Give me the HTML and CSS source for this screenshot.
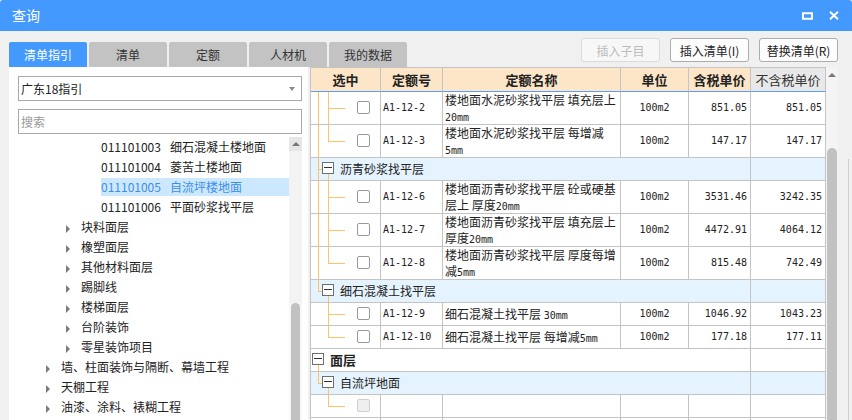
FILE: index.html
```html
<!DOCTYPE html>
<html lang="zh">
<head>
<meta charset="utf-8">
<title>查询</title>
<link rel="stylesheet" href="styles.css">
</head>
<body>
<div class="window">
  <div class="titlebar">
    <span class="title">查询</span>
    <span class="ctrls">
      <svg class="ic" width="11" height="8" viewBox="0 0 11 8"><rect x="1" y="1.25" width="9" height="5.5" fill="none" stroke="#fff" stroke-width="2"/></svg>
      <svg class="ic" width="10" height="9" viewBox="0 0 10 9"><path d="M1 0.8L9 8.2M9 0.8L1 8.2" stroke="#fff" stroke-width="2"/></svg>
    </span>
  </div>

  <div class="toolbar">
    <div class="tabs">
      <div class="tab active">清单指引</div>
      <div class="tab">清单</div>
      <div class="tab">定额</div>
      <div class="tab">人材机</div>
      <div class="tab">我的数据</div>
    </div>
    <div class="buttons">
      <button class="btn disabled">插入子目</button>
      <button class="btn">插入清单(I)</button>
      <button class="btn">替换清单(R)</button>
    </div>
  </div>

  <div class="content">
    <div class="left">
      <div class="select"><span>广东18指引</span><span class="caret"></span></div>
      <div class="search">搜索</div>
      <div class="tree-wrap">
        <div class="tree">
          <div class="node l3"><span class="code">011101003</span>细石混凝土楼地面</div>
          <div class="node l3"><span class="code">011101004</span>菱苦土楼地面</div>
          <div class="node l3 sel"><span class="code">011101005</span>自流坪楼地面</div>
          <div class="node l3"><span class="code">011101006</span>平面砂浆找平层</div>
          <div class="node l2"><span class="tri"></span>块料面层</div>
          <div class="node l2"><span class="tri"></span>橡塑面层</div>
          <div class="node l2"><span class="tri"></span>其他材料面层</div>
          <div class="node l2"><span class="tri"></span>踢脚线</div>
          <div class="node l2"><span class="tri"></span>楼梯面层</div>
          <div class="node l2"><span class="tri"></span>台阶装饰</div>
          <div class="node l2"><span class="tri"></span>零星装饰项目</div>
          <div class="node l1"><span class="tri"></span>墙、柱面装饰与隔断、幕墙工程</div>
          <div class="node l1"><span class="tri"></span>天棚工程</div>
          <div class="node l1"><span class="tri"></span>油漆、涂料、裱糊工程</div>
        </div>
        <div class="vscroll">
          <div class="sarrow"><span class="up"></span></div>
          <div class="sgap"></div>
          <div class="sthumb"></div>
        </div>
      </div>
    </div>

    <div class="right">
      <div class="grid-wrap">
        <table class="grid">
          <colgroup>
            <col class="c1"><col class="c2"><col class="c3"><col class="c4"><col class="c5"><col class="c6">
          </colgroup>
          <thead>
            <tr>
              <th>选中</th><th>定额号</th><th>定额名称</th><th>单位</th><th>含税单价</th><th class="notax">不含税单价</th>
            </tr>
          </thead>
          <tbody>
            <tr class="r2">
              <td class="tc"><span class="v1"></span><span class="v2"></span><span class="h2"></span><span class="cb"></span></td>
              <td class="code">A1-12-2</td>
              <td class="name">楼地面水泥砂浆找平层 填充层上<br><span class="m">20mm</span></td>
              <td class="unit">100m2</td>
              <td class="num">851.05</td>
              <td class="num">851.05</td>
            </tr>
            <tr class="r2">
              <td class="tc"><span class="v1"></span><span class="v2h"></span><span class="h2"></span><span class="cb"></span></td>
              <td class="code">A1-12-3</td>
              <td class="name">楼地面水泥砂浆找平层 每增减<br><span class="m">5mm</span></td>
              <td class="unit">100m2</td>
              <td class="num">147.17</td>
              <td class="num">147.17</td>
            </tr>
            <tr class="r1 grp">
              <td colspan="5" class="tc gname"><span class="v1"></span><span class="h1"></span><span class="box b1"></span><span class="v2b"></span>沥青砂浆找平层</td>
              <td></td>
            </tr>
            <tr class="r2">
              <td class="tc"><span class="v1"></span><span class="v2"></span><span class="h2"></span><span class="cb"></span></td>
              <td class="code">A1-12-6</td>
              <td class="name">楼地面沥青砂浆找平层 砼或硬基<br>层上 厚度<span class="m">20mm</span></td>
              <td class="unit">100m2</td>
              <td class="num">3531.46</td>
              <td class="num">3242.35</td>
            </tr>
            <tr class="r2">
              <td class="tc"><span class="v1"></span><span class="v2"></span><span class="h2"></span><span class="cb"></span></td>
              <td class="code">A1-12-7</td>
              <td class="name">楼地面沥青砂浆找平层 填充层上<br>厚度<span class="m">20mm</span></td>
              <td class="unit">100m2</td>
              <td class="num">4472.91</td>
              <td class="num">4064.12</td>
            </tr>
            <tr class="r2">
              <td class="tc"><span class="v1"></span><span class="v2h"></span><span class="h2"></span><span class="cb"></span></td>
              <td class="code">A1-12-8</td>
              <td class="name">楼地面沥青砂浆找平层 厚度每增<br>减<span class="m">5mm</span></td>
              <td class="unit">100m2</td>
              <td class="num">815.48</td>
              <td class="num">742.49</td>
            </tr>
            <tr class="r1 grp">
              <td colspan="5" class="tc gname"><span class="v1h"></span><span class="h1"></span><span class="box b1"></span><span class="v2b"></span>细石混凝土找平层</td>
              <td></td>
            </tr>
            <tr class="r1">
              <td class="tc"><span class="v2"></span><span class="h2"></span><span class="cb"></span></td>
              <td class="code">A1-12-9</td>
              <td class="name">细石混凝土找平层 <span class="m">30mm</span></td>
              <td class="unit">100m2</td>
              <td class="num">1046.92</td>
              <td class="num">1043.23</td>
            </tr>
            <tr class="r1">
              <td class="tc"><span class="v2h"></span><span class="h2"></span><span class="cb"></span></td>
              <td class="code">A1-12-10</td>
              <td class="name">细石混凝土找平层 每增减<span class="m">5mm</span></td>
              <td class="unit">100m2</td>
              <td class="num">177.18</td>
              <td class="num">177.11</td>
            </tr>
            <tr class="r1">
              <td colspan="5" class="tc lvl0"><span class="box b0"></span><span class="v1b"></span>面层</td>
              <td></td>
            </tr>
            <tr class="r1 grp">
              <td colspan="5" class="tc gname"><span class="v1h"></span><span class="h1"></span><span class="box b1"></span><span class="v2b"></span>自流坪地面</td>
              <td></td>
            </tr>
            <tr class="r1">
              <td class="tc"><span class="v2h"></span><span class="h2"></span><span class="cb dis"></span></td>
              <td></td><td></td><td></td><td></td><td></td>
            </tr>
            <tr class="r1">
              <td></td><td></td><td></td><td></td><td></td><td></td>
            </tr>
          </tbody>
        </table>
      </div>
      <div class="vscroll2">
        <div class="sarrow2"><span class="up"></span></div>
        <div class="sgap2"></div>
        <div class="sthumb2"></div>
      </div>
      <div class="edge"><div class="edge-line"></div></div>
    </div>
  </div>
</div>
</body>
</html>
```

FILE: styles.css
```css
* { box-sizing: border-box; }
html, body { margin: 0; padding: 0; }
body {
  width: 852px;
  height: 420px;
  overflow: hidden;
  background: #f0f0f0;
  font-family: "Noto Sans CJK SC", "Noto Sans", sans-serif;
  font-size: 12px;
  color: #222;
}
.window {
  width: 852px;
  height: 420px;
  display: flex;
  flex-direction: column;
}

/* title bar */
.titlebar {
  height: 31px;
  flex: none;
  background: #4499ff;
  color: #fff;
  display: flex;
  align-items: center;
  padding-left: 12px;
  border-radius: 3px 3px 0 0;
}
.title { flex: 1; font-size: 14px; line-height: 31px; }
.ctrls { display: flex; align-items: center; gap: 16px; padding-right: 13px; }
.ic { display: block; }

/* toolbar */
.toolbar {
  height: 36px;
  flex: none;
  display: flex;
  padding: 0 14px 0 9px;
}
.tabs { display: flex; gap: 2px; align-self: flex-end; }
.tab {
  width: 78px;
  height: 25px;
  line-height: 25px;
  text-align: center;
  background: #c3c3c3;
  color: #333;
  border-radius: 2px 2px 0 0;
  font-size: 12px;
}
.tab.active { background: #4499ff; color: #fff; }
.buttons { margin-left: auto; margin-top: 7px; display: flex; gap: 10px; align-self: flex-start; }
.btn {
  width: 79px;
  height: 24px;
  padding: 0;
  font-family: inherit;
  font-size: 12px;
  color: #222;
  background: #fdfdfd;
  border: 1px solid #adadad;
  border-radius: 3px;
}
.btn.disabled { color: #bcbcbc; border-color: #dadada; background: #f7f7f7; }

/* content */
.content { flex: 1; display: flex; min-height: 0; }
.left {
  width: 299px;
  margin-left: 9px;
  background: #fff;
  padding: 9px 6px 0 9px;
  display: flex;
  flex-direction: column;
}
.select {
  height: 25px;
  border: 1px solid #a9a9a9;
  display: flex;
  align-items: center;
  justify-content: space-between;
  padding: 0 6px 0 2px;
  line-height: 23px;
}
.caret {
  width: 0; height: 0;
  border-top: 4px solid #8a8a8a;
  border-left: 3px solid transparent;
  border-right: 3px solid transparent;
}
.search {
  margin-top: 8px;
  height: 25px;
  border: 1px solid #a9a9a9;
  padding-left: 2px;
  line-height: 23px;
  color: #9a9a9a;
}
.tree-wrap { flex: 1; margin-top: 3px; display: flex; min-height: 0; overflow: hidden; }
.tree { flex: 1; }
.node { height: 20px; line-height: 20px; white-space: nowrap; }
.node.l3 { padding-left: 83px; }
.node.l2 { padding-left: 48px; }
.node.l1 { padding-left: 28px; }
.node .code { margin-right: 9px; }
.node.sel {
  color: #3f8ee6;
  background: #cce8ff;
  background-clip: content-box;
  padding-top: 1px;
  padding-bottom: 1px;
  line-height: 18px;
}
.tri {
  display: inline-block;
  width: 0; height: 0;
  border-left: 4px solid #7b7b7b;
  border-top: 4px solid transparent;
  border-bottom: 4px solid transparent;
  margin-right: 11px;
  vertical-align: -1px;
}
.vscroll { width: 13px; display: flex; flex-direction: column; background: #f7f7f7; }
.sarrow { height: 14px; display: flex; justify-content: center; align-items: center; background: #e6e6e6; }
.up {
  width: 0; height: 0;
  border-bottom: 4px solid #777;
  border-left: 4px solid transparent;
  border-right: 4px solid transparent;
}
.sgap { height: 152px; background: #f3f3f3; }
.sthumb { flex: 1; margin: 0 2px 0 2px; background: #c1c1c1; border-radius: 5px 5px 0 0; }

/* right grid */
.right { flex: 1; display: flex; padding-left: 2px; background: #f0f0f0; }
.grid-wrap { width: 516px; overflow: hidden; background: #fff; }
.grid {
  width: 516px;
  table-layout: fixed;
  border-collapse: separate;
  border-spacing: 0;
  border-left: 1px solid #c4c4c4;
  border-top: 1px solid #c4c4c4;
}
.c1 { width: 70px; } .c2 { width: 62px; } .c3 { width: 178px; }
.c4 { width: 68px; } .c5 { width: 62px; } .c6 { width: 75px; }
th {
  height: 24px;
  padding: 0;
  background: #fde6c8;
  font-size: 13px;
  font-weight: bold;
  color: #222;
  text-align: center;
  border-right: 1px solid #c4c4c4;
  border-bottom: 1px solid #5b9ef0;
  line-height: 22px;
}
th.notax { background: #e8e8e8; font-weight: normal; color: #333; }
td {
  padding: 0;
  border-right: 1px solid #c4c4c4;
  border-bottom: 1px solid #c4c4c4;
  vertical-align: middle;
  white-space: nowrap;
  overflow: hidden;
  line-height: 16px;
}
tr.r2 { height: 33px; }
tr.r1 { height: 23px; }
tr.grp td { background: #e5f3fe; }
td.code { font-family: "DejaVu Sans Mono", "Liberation Mono", monospace; font-size: 10px; padding-left: 2px; line-height: 12px; }
td.name { line-height: 16px; padding-left: 2px; font-size: 12px; }
.m { font-family: "DejaVu Sans Mono", "Liberation Mono", monospace; font-size: 10px; line-height: 10px; }
td.unit { font-family: "DejaVu Sans Mono", "Liberation Mono", monospace; font-size: 10px; text-align: center; line-height: 12px; }
td.num { font-family: "DejaVu Sans Mono", "Liberation Mono", monospace; font-size: 10px; text-align: right; padding-right: 3px; line-height: 12px; }

.tc { position: relative; }
td.gname { padding-left: 29px; font-size: 12px; line-height: 18px; }
td.lvl0 { padding-left: 19px; font-size: 13px; font-weight: bold; line-height: 18px; }
.v1, .v1h, .v1b, .v2, .v2h, .v2b, .h1, .h2 { position: absolute; background: #fcc46a; }
.v1 { left: 7px; width: 1px; top: 0; bottom: -1px; }
.v1h { left: 7px; width: 1px; top: 0; height: 50%; }
.v1b { left: 7px; width: 1px; top: calc(50% + 5px); bottom: -1px; }
.v2 { left: 17px; width: 1px; top: 0; bottom: -1px; }
.v2h { left: 17px; width: 1px; top: 0; height: 50%; }
.v2b { left: 17px; width: 1px; top: calc(50% + 5px); bottom: -1px; }
.h1 { left: 7px; width: 5px; height: 1px; top: 50%; }
.h2 { left: 17px; width: 17px; height: 1px; top: 50%; }
.cb {
  position: absolute;
  left: 46px;
  top: 50%;
  margin-top: -7px;
  width: 13px;
  height: 13px;
  border: 1px solid #9a9a9a;
  border-radius: 2px;
  background: #fff;
}
.cb.dis { background: #efefef; border-color: #cfcfcf; }
.box {
  position: absolute;
  top: 50%;
  margin-top: -7px;
  width: 12px;
  height: 12px;
  border: 1px solid #6e6e6e;
  background: #fff;
}
.box::after {
  content: "";
  position: absolute;
  left: 1px;
  right: 1px;
  top: 4px;
  height: 1px;
  background: #333;
}
.b1 { left: 11px; }
.b0 { left: 1px; }

.vscroll2 { width: 12px; display: flex; flex-direction: column; background: #f4f4f4; }
.sarrow2 { height: 16px; display: flex; justify-content: center; align-items: center; }
.sgap2 { height: 65px; }
.sthumb2 { flex: 1; margin: 0 1px 0 1px; background: #c1c1c1; border-radius: 5px 5px 0 0; }
.edge { flex: 1; padding-top: 92px; padding-left: 10px; }
.edge-line { width: 1px; height: 100%; background: #cfcfcf; }
```
